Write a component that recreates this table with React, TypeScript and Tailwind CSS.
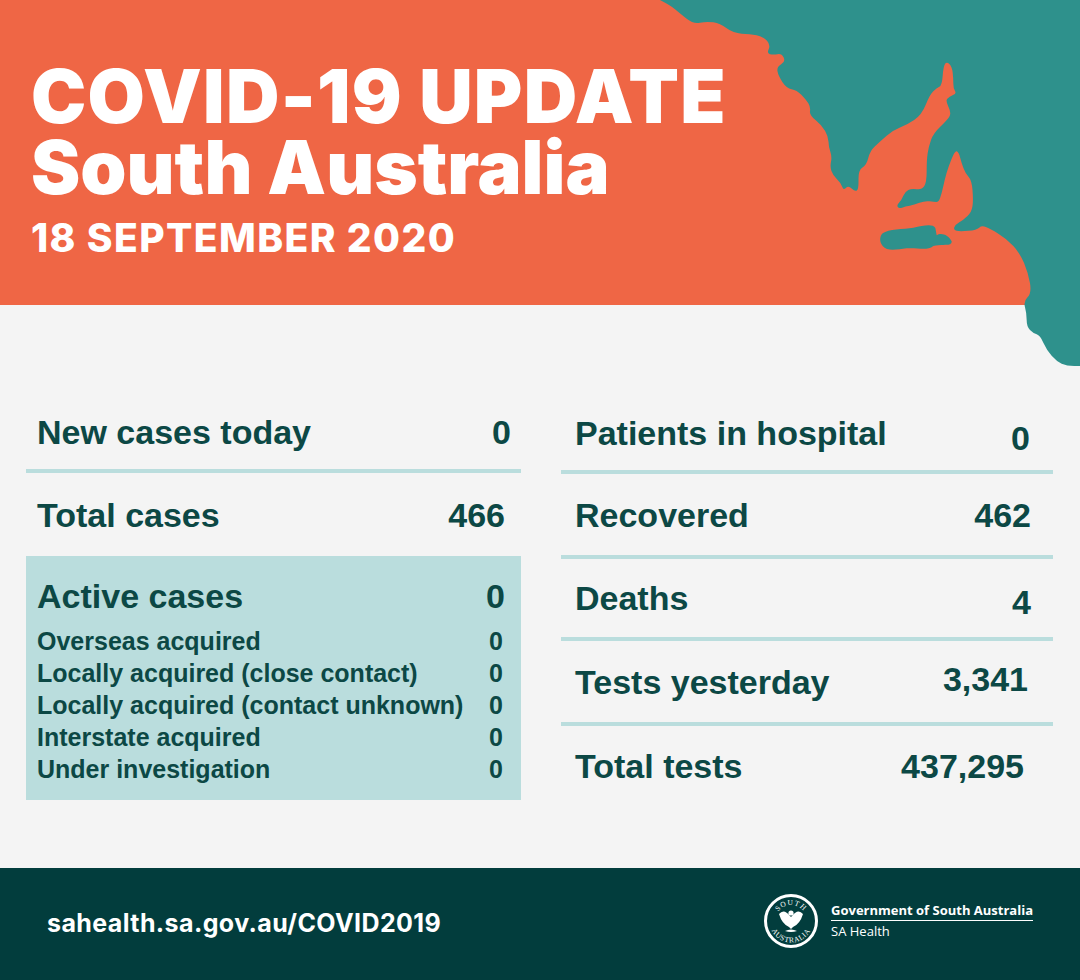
import React from 'react';

const ink = 'text-[#0c4845]';

// coastline traced in a 1320x1140 box (3x of the 440x380 corner it sits in)
const coast: [number, number][] = [
  [50, -5], [90, 15], [120, 40], [160, 72], [200, 64], [240, 70], [280, 100], [330, 102],
  [370, 110], [392, 135], [380, 160], [400, 165], [425, 160], [437, 185], [410, 200],
  [415, 228], [440, 265], [470, 270], [498, 298], [512, 322], [508, 345], [545, 375],
  [565, 410], [566, 440], [576, 470], [570, 500], [578, 525], [604, 550], [610, 572],
  [625, 556], [645, 575], [656, 568], [655, 510], [680, 495], [690, 452], [720, 425],
  [760, 390], [800, 375], [845, 345], [870, 282], [890, 265], [906, 256], [910, 200],
  [920, 184], [936, 200], [940, 235], [940, 266], [950, 280], [928, 290], [916, 302],
  [935, 340], [920, 362], [880, 400], [866, 440], [860, 480], [860, 548], [845, 570],
  [815, 565], [795, 575], [785, 600], [770, 615], [776, 626], [796, 620], [822, 615],
  [855, 602], [882, 606], [896, 606], [905, 580], [914, 540], [925, 500], [945, 452],
  [956, 456], [965, 490], [976, 520], [995, 540], [1000, 600], [995, 636], [970, 660],
  [946, 674], [940, 690], [960, 695], [1010, 690], [1025, 676], [1050, 686], [1100, 716],
  [1140, 760], [1165, 820], [1175, 880], [1150, 904], [1160, 940], [1160, 980],
  [1180, 1000], [1200, 1006], [1220, 1050], [1250, 1084], [1280, 1098], [1325, 1098],
];

function smooth(pts: [number, number][]) {
  const mid = (a: [number, number], b: [number, number]) => `${(a[0] + b[0]) / 2},${(a[1] + b[1]) / 2}`;
  let d = `M${pts[0][0]},${pts[0][1]}`;
  for (let i = 1; i < pts.length - 1; i++) {
    d += ` Q${pts[i][0]},${pts[i][1]} ${mid(pts[i], pts[i + 1])}`;
  }
  const last = pts[pts.length - 1];
  return d + ` L${last[0]},${last[1]}`;
}

function MapCorner() {
  return (
    <svg className="absolute top-0 right-0 w-[440px] h-[380px]" viewBox="0 0 1320 1140">
      <path d={smooth(coast) + ' L1325,-5 Z'} fill="#2e918c" />
      {/* Kangaroo Island */}
      <path
        d="M728,700 C745,686 790,688 820,683 C850,677 878,670 886,684 L890,706 C902,696 926,704 935,724 C936,742 905,730 880,738 C860,754 832,742 800,745 C772,748 742,756 728,738 C718,726 718,710 728,700Z"
        fill="#2e918c"
      />
    </svg>
  );
}

function Crest() {
  return (
    <svg width="56" height="56" viewBox="-28 -28 56 56">
      <defs>
        <path id="topArc" d="M-16,0 A16,16 0 0 1 16,0" />
        <path id="botArc" d="M-21.5,0 A21.5,21.5 0 0 0 21.5,0" />
      </defs>
      <circle r="25.5" fill="none" stroke="white" strokeWidth="3" />
      <text fill="white" fontSize="7.5" fontFamily="'Liberation Serif', serif" letterSpacing="1">
        <textPath href="#topArc" startOffset="50%" textAnchor="middle">SOUTH</textPath>
      </text>
      <text fill="white" fontSize="7.5" fontFamily="'Liberation Serif', serif" letterSpacing="0.6">
        <textPath href="#botArc" startOffset="50%" textAnchor="middle">AUSTRALIA</textPath>
      </text>
      <path d="M-12,-7 Q-7,-13 -1,-5 L0,-4 L1,-5 Q7,-13 12,-7 Q9,3 2,6 L0,8 L-2,6 Q-9,3 -12,-7Z" fill="white" />
      <circle cx="0" cy="-8" r="2.6" fill="white" />
      <path d="M-6,10 Q0,7 6,10 Q0,12 -6,10Z" fill="white" />
    </svg>
  );
}

function Divider() {
  return <div className="h-[4px] bg-[#badddd]" />;
}

function StatRow({ label, value, h, valueClass = '' }: { label: string; value: string; h: string; valueClass?: string }) {
  return (
    <div className={`flex items-center justify-between ${h}`}>
      <span>{label}</span>
      <span className={valueClass}>{value}</span>
    </div>
  );
}

const sources = [
  'Overseas acquired',
  'Locally acquired (close contact)',
  'Locally acquired (contact unknown)',
  'Interstate acquired',
  'Under investigation',
];

export default function App() {
  return (
    <div className="relative w-[1080px] h-[980px] overflow-hidden bg-[#f4f4f4]">
      <header className="h-[305px] bg-[#ef6645] pl-[31px] pt-[61px] text-white font-['Inter',sans-serif]">
        <h1 className="text-[74px] leading-[71px] font-black">
          <span className="tracking-[1.3px]">COVID-19 UPDATE</span>
          <br />
          <span className="tracking-[0px]">South Australia</span>
        </h1>
        <p className="mt-[15px] text-[39px] leading-[40px] font-extrabold tracking-[1.4px]">18 SEPTEMBER 2020</p>
      </header>

      <MapCorner />

      <main className={`h-[563px] flex pt-[90px] font-['Liberation_Sans',Arial,sans-serif] font-bold ${ink} text-[34px] leading-[40px]`}>
        <section className="ml-[26px] w-[495px]">
          <StatRow label="New cases today" value="0" h="h-[74px] pl-[11px] pr-[10px]" />
          <Divider />
          <StatRow label="Total cases" value="466" h="h-[83px] pl-[11px] pr-[16px]" />
          <div className="bg-[#badddd] pt-[19px] pb-[15px] pl-[11px] pr-[18px]">
            <div className="flex items-center justify-between h-[42px]">
              <span>Active cases</span>
              <span className="mr-[-2px]">0</span>
            </div>
            <ul className="mt-[8px] text-[25px] leading-[32px]">
              {sources.map((s) => (
                <li key={s} className="flex justify-between h-[32px]">
                  <span>{s}</span>
                  <span>0</span>
                </li>
              ))}
            </ul>
          </div>
        </section>

        <section className="ml-[40px] w-[492px]">
          <StatRow label="Patients in hospital" value="0" h="h-[75px] pl-[14px] pr-[23px]" valueClass="mt-[10px]" />
          <Divider />
          <StatRow label="Recovered" value="462" h="h-[81px] pl-[14px] pr-[22px]" />
          <Divider />
          <StatRow label="Deaths" value="4" h="h-[78px] pl-[14px] pr-[22px]" valueClass="mt-[8px]" />
          <Divider />
          <StatRow label="Tests yesterday" value="3,341" h="h-[81px] pl-[14px] pr-[25px]" valueClass="mt-[-6px]" />
          <Divider />
          <StatRow label="Total tests" value="437,295" h="h-[80px] pl-[14px] pr-[29px]" />
        </section>
      </main>

      <footer className="h-[112px] bg-[#023d3d] flex items-center justify-between pl-[47px] pr-[47px] text-white">
        <span className="font-['Inter',sans-serif] font-bold text-[25px] tracking-[0.4px]">sahealth.sa.gov.au/COVID2019</span>
        <div className="flex items-center gap-[12px] mt-[-6px]">
          <Crest />
          <div className="font-['Open_Sans',sans-serif]">
            <div className="text-[13px] leading-[16px] font-bold border-b-[1.5px] border-white pb-[2px]">Government of South Australia</div>
            <div className="text-[13px] leading-[18px] pt-[1px]">SA Health</div>
          </div>
        </div>
      </footer>
    </div>
  );
}
